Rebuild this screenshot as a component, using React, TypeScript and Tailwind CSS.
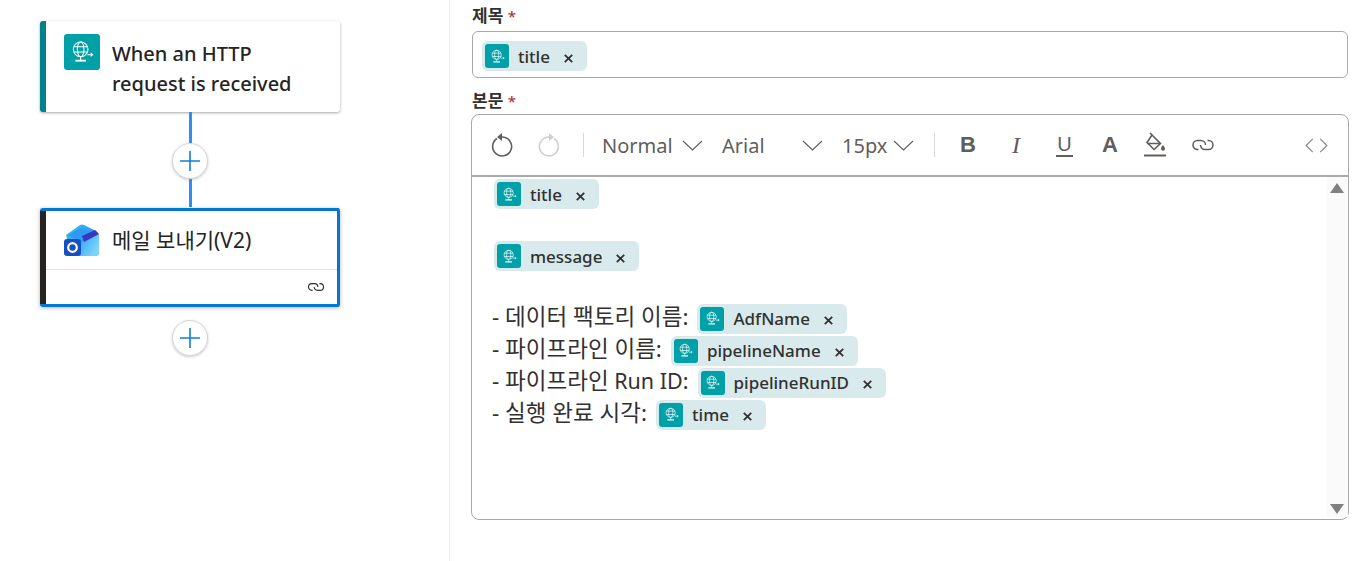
import React from "react";

const font = { fontFamily: '"Noto Sans", "Noto Sans CJK KR", sans-serif' };

function GlobeIcon({ size = 16 }: { size?: number }) {
    return (
        <svg width={size} height={size} viewBox="0 0 18 18" fill="none" stroke="white" strokeWidth="0.8">
            <circle cx="8" cy="7" r="5.5" />
            <ellipse cx="8" cy="7" rx="2.5" ry="5.5" />
            <path d="M2.8 5h10.4M2.8 9h10.4M8 12.5v2.5" />
            <path d="M4 15.5h8" strokeWidth="1.4" />
            <path d="M13 11h4M15.5 9.7l1.5 1.3-1.5 1.3" />
        </svg>
    );
}

function OutlookIcon() {
    return (
        <svg width="35" height="33" viewBox="0 0 35 33">
            <defs>
                <linearGradient id="back" x1="0" y1="0" x2="1" y2="1">
                    <stop offset="0" stopColor="#35c6f7" />
                    <stop offset="1" stopColor="#2f6fe8" />
                </linearGradient>
                <linearGradient id="front" x1="0" y1="0" x2="1" y2="0.6">
                    <stop offset="0" stopColor="#1f9cf0" />
                    <stop offset="1" stopColor="#7fd4fb" />
                </linearGradient>
            </defs>
            <path d="M2 11 L16 1 Q18 0 20 1 L32 7 Q35 9 35 12 V28 Q35 32 31 32 H8 Z" fill="url(#back)" />
            <path d="M4 11 L17 4 L26 8 L13 16 Z" fill="#2c9bf0" />
            <path d="M14 20 L33 9 L35 12 V28 Q35 32 31 32 H12 Z" fill="url(#front)" />
            <path d="M18 12 L31 6 L35 10 L20 18 Z" fill="#3a35c4" />
            <rect x="0" y="15" width="17" height="17" rx="3" fill="#1550c0" />
            <circle cx="8.5" cy="23.500" r="4.300" fill="none" stroke="white" strokeWidth="2.2" />
        </svg>
    );
}

function LinkIcon({ w, h, color }: { w: number; h: number; color: string }) {
    return (
        <svg width={w} height={h} viewBox="0 0 24 16" fill="none" stroke={color} strokeWidth="1.5">
            <path d="M7.500 12.500h-1a4.500 4.500 0 0 1 0-9H10a4.500 4.500 0 0 1 4.500 4.500" />
            <path d="M16.500 3.500h1a4.500 4.500 0 0 1 0 9H14a4.500 4.500 0 0 1-4.500-4.500" />
        </svg>
    );
}

function Chip({ label }: { label: string }) {
    return (
        <span className="inline-flex h-[30px] items-center rounded-md bg-[#d9eaed] pl-[3px] pr-[14px]">
            <span className="flex h-6 w-6 items-center justify-center rounded-[3px] bg-[#00a0a8]">
                <GlobeIcon size={15} />
            </span>
            <span className="ml-[9px] pt-px text-[17px] font-medium text-[#323130]">{label}</span>
            <svg className="ml-[14px] mt-1" width="9" height="9" viewBox="0 0 8 8" stroke="#323130" strokeWidth="1.6">
                <path d="M.7.7l6.6 6.6M7.3.7L.7 7.3" />
            </svg>
        </span>
    );
}

function AddButton() {
    return (
        <div className="flex h-9 w-9 items-center justify-center rounded-full border border-[#d6d6d6] bg-white shadow-[0_1px_3px_rgba(0,0,0,0.2)]">
            <svg width="22" height="22" viewBox="0 0 22 22" stroke="#0f7fd8" strokeWidth="1.6">
                <path d="M11 1v20M1 11h20" />
            </svg>
        </div>
    );
}

function Chevron({ className }: { className: string }) {
    return (
        <svg className={className} width="21" height="11" viewBox="0 0 21 11" fill="none" stroke="#605e5c" strokeWidth="1.1">
            <path d="M1 1l9.500 9L20 1" />
        </svg>
    );
}

function Label({ text }: { text: string }) {
    return (
        <div className="h-[22px] text-[17px] font-bold leading-[22px] text-[#323130]">
            {text} <span className="text-[15px] font-normal text-[#a4262c]">*</span>
        </div>
    );
}

function BodyRow({ text, latin, chip }: { text: string; latin?: string; chip: string }) {
    return (
        <div className="flex h-8 items-center pl-[20px] text-[22.5px] text-[#323130]">
            <span className="pb-[3px]">{text}{latin && <span className="text-[21.5px]"> {latin}</span>}</span>
            <span className="ml-[9px]"><Chip label={chip} /></span>
        </div>
    );
}

export default function App() {
    return (
        <div className="flex h-[561px] w-[1372px] overflow-hidden bg-white" style={font}>
            <div className="flex h-[561px] w-[450px] shrink-0 flex-col items-start border-r border-[#ececec] pl-10 pt-[21px]">
                <div className="flex h-[91px] w-[300px] rounded-[3px] border-l-[6px] border-[#00828b] bg-white shadow-[0_1px_3px_rgba(0,0,0,0.35)]">
                    <div className="ml-[18px] mt-[13px] flex h-9 w-9 items-center justify-center rounded-[3px] bg-[#00a0a8]">
                        <GlobeIcon size={24} />
                    </div>
                    <div className="ml-3 mt-[18px] w-[200px] text-[20px] font-medium leading-[30px] text-[#252423]">
                        When an HTTP request is received
                    </div>
                </div>
                <div className="flex w-[300px] flex-col items-center">
                    <div className="h-[31px] w-[3px] bg-[#2d8ff5]" />
                    <AddButton />
                    <div className="h-[28px] w-[3px] bg-[#2d8ff5]" />
                    <div className="h-px" />
                </div>
                <div className="flex h-[99px] w-[300px] rounded-[3px] border-[3px] border-l-0 border-[#0078d4] bg-white shadow-[0_1px_4px_rgba(0,0,0,0.3)]">
                    <div className="w-[6px] bg-[#252423]" />
                    <div className="flex flex-1 flex-col">
                        <div className="flex h-[59px] items-center border-b border-[#e1e1e1] pl-[18px]">
                            <OutlookIcon />
                            <span className="ml-[13px] pt-px text-[21px] text-[#252423]">메일 보내기(V2)</span>
                        </div>
                        <div className="flex flex-1 items-center justify-end pr-3">
                            <LinkIcon w={18} h={12} color="#323130" />
                        </div>
                    </div>
                </div>
                <div className="mt-[13px] flex w-[300px] justify-center">
                    <AddButton />
                </div>
            </div>

            <div className="flex w-[900px] flex-col pl-[21px] pt-[5px]">
                <div className="ml-px"><Label text="제목" /></div>
                <div className="ml-px mt-[4px] flex h-[47px] w-[876px] items-center rounded-md border border-[#a8a8a8] pl-[9px] pt-[3px]">
                    <Chip label="title" />
                </div>
                <div className="ml-px mt-[12px]"><Label text="본문" /></div>
                <div className="mt-[2px] flex h-[406px] w-[878px] flex-col rounded-lg border border-[#a8a8a8]">
                    <div className="flex h-[62px] shrink-0 items-center border-b-2 border-[#aaaaaa] text-[20px] text-[#605e5c]">
                        <svg className="ml-[18px]" width="24" height="26" viewBox="0 0 24 26" fill="none" stroke="#605e5c" strokeWidth="1.6">
                            <path d="M7 6.500a9.500 9.500 0 1 0 5-1.500" />
                            <path d="M12 1v8L7 5z" fill="#605e5c" stroke="none" />
                        </svg>
                        <svg className="ml-[23px]" width="24" height="26" viewBox="0 0 24 26" fill="none" stroke="#cfcfcf" strokeWidth="1.6">
                            <path d="M17 6.500a9.500 9.500 0 1 1-5-1.500" />
                            <path d="M12 1v8l5-4z" fill="#cfcfcf" stroke="none" />
                        </svg>
                        <div className="ml-[22px] h-6 w-px bg-[#d8d8d8]" />
                        <span className="ml-[18px] w-[68px] pt-px">Normal</span>
                        <Chevron className="ml-[12px]" />
                        <span className="ml-[19px] w-[60px] pt-px">Arial</span>
                        <Chevron className="ml-[20px]" />
                        <span className="ml-[19px] w-[44px] pt-px">15px</span>
                        <Chevron className="ml-[7px]" />
                        <div className="ml-[20px] h-6 w-px bg-[#d8d8d8]" />
                        <span className="ml-[25px] w-[16px] text-center text-[22px] font-bold leading-none" style={{ fontFamily: '"Liberation Sans", sans-serif' }}>B</span>
                        <span className="ml-[32px] w-[16px] text-center text-[24px] italic leading-none" style={{ fontFamily: '"Liberation Serif", serif' }}>I</span>
                        <span className="ml-[32px] w-[17px] border-b-2 border-[#605e5c] text-center text-[20px] leading-[22px]" style={{ fontFamily: '"Liberation Sans", sans-serif' }}>U</span>
                        <span className="ml-[29px] w-[16px] text-center text-[22px] font-bold leading-none" style={{ fontFamily: '"Liberation Sans", sans-serif' }}>A</span>
                        <svg className="ml-[25px]" width="24" height="26" viewBox="0 0 24 26" fill="none" stroke="#605e5c" strokeWidth="1.6">
                            <path d="M9 3l8.500 8.500-6.500 6-7-7zM4 11.500h13" />
                            <path d="M9 3L7 1" />
                            <path d="M20 13c1.500 2 2 3 2 3.800a2 2 0 0 1-4 0c0-.8.500-1.800 2-3.800z" fill="#605e5c" stroke="none" />
                            <path d="M1 23.500h22" strokeWidth="2" />
                        </svg>
                        <span className="ml-[24px]"><LinkIcon w={24} h={16} color="#605e5c" /></span>
                        <svg className="ml-[90px]" width="23" height="15" viewBox="0 0 24 16" fill="none" stroke="#8a8886" strokeWidth="1.3">
                            <path d="M8 1L1 8l7 7M16 1l7 7-7 7" />
                        </svg>
                    </div>
                    <div className="flex min-h-0 flex-1">
                        <div className="flex-1 pt-[2px]">
                            <div className="pl-[22px]"><Chip label="title" /></div>
                            <div className="mt-[32px] pl-[22px]"><Chip label="message" /></div>
                            <div className="mt-[31px]">
                                <BodyRow text="- 데이터 팩토리 이름:" chip="AdfName" />
                                <BodyRow text="- 파이프라인 이름:" chip="pipelineName" />
                                <BodyRow text="- 파이프라인" latin="Run ID:" chip="pipelineRunID" />
                                <BodyRow text="- 실행 완료 시각:" chip="time" />
                            </div>
                        </div>
                        <div className="mb-[2px] flex w-[21px] flex-col items-center justify-between bg-[#fafafa] pb-[3px] pr-[2px] pt-[6px]">
                            <div className="h-0 w-0 border-x-[7px] border-b-[10px] border-x-transparent border-b-[#808080]" />
                            <div className="h-0 w-0 border-x-[7px] border-t-[10px] border-x-transparent border-t-[#808080]" />
                        </div>
                    </div>
                </div>
            </div>
        </div>
    );
}
